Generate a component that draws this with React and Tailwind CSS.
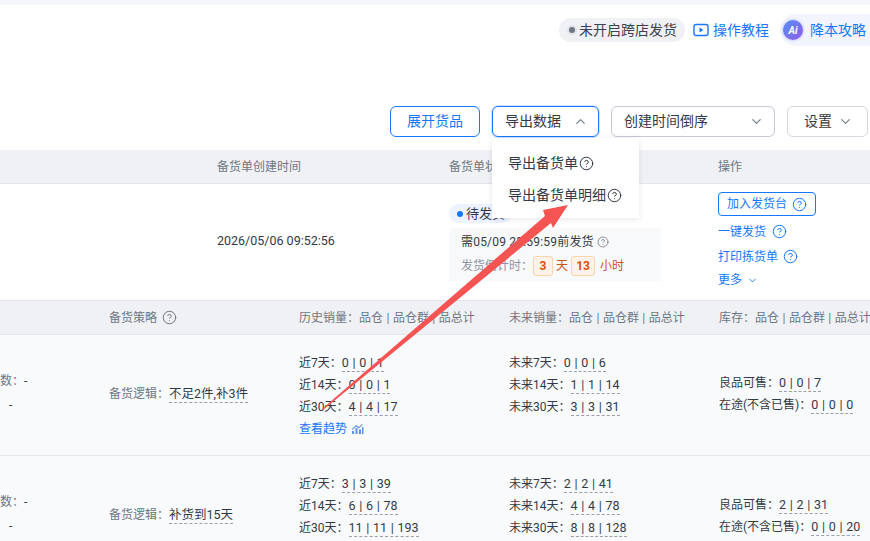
import { ChevronDown, ChevronUp, CircleHelp } from "lucide-react";

const font = { fontFamily: 'Roboto, "Noto Sans CJK SC", sans-serif' };

const rows = [
  {
    strategy: "不足2件,补3件",
    history: [["近7天：", "0 | 0 | 1"], ["近14天：", "0 | 0 | 1"], ["近30天：", "4 | 4 | 17"]],
    future: [["未来7天：", "0 | 0 | 6"], ["未来14天：", "1 | 1 | 14"], ["未来30天：", "3 | 3 | 31"]],
    stock: [["良品可售：", "0 | 0 | 7"], ["在途(不含已售)：", "0 | 0 | 0"]],
    trend: true,
  },
  {
    strategy: "补货到15天",
    history: [["近7天：", "3 | 3 | 39"], ["近14天：", "6 | 6 | 78"], ["近30天：", "11 | 11 | 193"]],
    future: [["未来7天：", "2 | 2 | 41"], ["未来14天：", "4 | 4 | 78"], ["未来30天：", "8 | 8 | 128"]],
    stock: [["良品可售：", "2 | 2 | 31"], ["在途(不含已售)：", "0 | 0 | 20"]],
  },
];

function Help({ className = "h-[15px] w-[15px]" }) {
  return <CircleHelp className={`inline-block shrink-0 ${className}`} strokeWidth={1.6} />;
}

function Metric({ label, value }) {
  return (
    <p className="flex h-[22px] items-center whitespace-nowrap text-[#333a47]">
      {label}
      <span className="border-b border-dashed border-[#9aa1ad] text-[12.5px] leading-[17px] [word-spacing:0.6px]">{value}</span>
    </p>
  );
}

function Row({ item }) {
  return (
    <div className="grid h-[121px] shrink-0 grid-cols-[109px_190px_210px_210px_1fr] border-b border-[#e4e6eb] bg-[#f9fafc] text-[12px]">
      <div className="relative">
        <div className="absolute left-0 top-[34px] flex h-[24px] w-[40px] items-center text-[#6f7683]">
          数：<span className="text-[#333a47]">-</span>
        </div>
        <div className="absolute left-[9px] top-[58px] flex h-[24px] items-center text-[#333a47]">-</div>
      </div>
      <div className="flex items-center whitespace-nowrap pb-[3px] text-[#6f7683]">
        备货逻辑：
        <span className="border-b border-dashed border-[#9aa1ad] text-[12.5px] leading-[17px] text-[#333a47]">{item.strategy}</span>
      </div>
      <div className="pt-[17px]">
        {item.history.map(([label, value]) => (
          <Metric key={label} label={label} value={value} />
        ))}
        {item.trend ? (
          <p className="mt-[1px] flex h-[20px] items-center gap-[4px] text-[#1677ff]">
            查看趋势
            <svg width="13" height="12" viewBox="0 0 13 12" fill="#5b93ee">
              <path d="M1 8h2v3H1zM4.500 5h2v6h-2zM8 6.500h2V11H8zM11 4h1.500v7H11zM1 6l4-4 3 2 3-3 .7.7L8 5.500 5 3.500 1.500 7z" />
            </svg>
          </p>
        ) : null}
      </div>
      <div className="pt-[17px]">
        {item.future.map(([label, value]) => (
          <Metric key={label} label={label} value={value} />
        ))}
      </div>
      <div className={item.trend ? "pt-[37px]" : "pt-[38px]"}>
        {item.stock.map(([label, value]) => (
          <Metric key={label} label={label} value={value} />
        ))}
      </div>
    </div>
  );
}

export default function App() {
  return (
    <div className="relative flex h-[541px] w-[870px] flex-col overflow-hidden bg-white" style={font}>
      <div className="h-[5px] shrink-0 bg-[#f5f6f9]" />

      <div className="flex h-[50px] shrink-0 items-center justify-end text-[14px]">
        <div className="flex h-[24px] items-center gap-[2px] rounded-full bg-[#f0f1f4] px-[8px] text-[#3b4250]">
          <span className="flex h-[10px] w-[10px] items-center justify-center rounded-full bg-[#e2e4e9]">
            <span className="h-[6px] w-[6px] rounded-full bg-[#6f7683]" />
          </span>
          未开启跨店发货
        </div>
        <div className="ml-[8px] flex items-center gap-[4px] text-[#1677ff]">
          <svg width="16" height="14" viewBox="0 0 16 14" fill="none">
            <rect x="1" y="1.500" width="14" height="11" rx="2" stroke="#1677ff" strokeWidth="1.400" />
            <path d="M6.500 4.500v5l4-2.500z" fill="#1677ff" />
          </svg>
          操作教程
        </div>
        <div className="ml-[11px] flex h-[32px] w-[90px] shrink-0 items-center gap-[7px] rounded-l-full bg-[#f2f5fe] pl-[3px] text-[#1677ff]">
          <span className="flex h-[20px] w-[20px] shrink-0 items-center justify-center rounded-full bg-gradient-to-br from-[#4f8df7] to-[#8a5be8] text-[10px] font-bold italic text-white shadow-[0_0_3px_rgba(120,110,240,0.6)]">
            Ai
          </span>
          <span className="whitespace-nowrap">降本攻略</span>
        </div>
      </div>

      <div className="mt-[51px] flex h-[31px] shrink-0 justify-end gap-[12px] pr-[2px] text-[14px]">
        <button type="button" className="flex w-[90px] items-center justify-center rounded-md border border-[#1677ff] text-[#1677ff]">
          展开货品
        </button>
        <button type="button" className="flex w-[107px] items-center justify-between rounded-md border border-[#1677ff] pl-[12px] pr-[10px] text-[#333a47] ring-1 ring-[#cfe2ff]">
          导出数据
          <ChevronUp className="h-[15px] w-[15px] text-[#7b8290]" />
        </button>
        <button type="button" className="flex w-[164px] items-center justify-between rounded-md border border-[#c5cad5] pl-[12px] pr-[10px] text-[#333a47]">
          创建时间倒序
          <ChevronDown className="h-[15px] w-[15px] text-[#7b8290]" />
        </button>
        <button type="button" className="flex w-[81px] items-center gap-[6px] rounded-md border border-[#d5d8df] pl-[16px] text-[#333a47]">
          设置
          <ChevronDown className="h-[15px] w-[15px] text-[#7b8290]" />
        </button>
      </div>

      <div className="mt-[13px] grid h-[34px] shrink-0 grid-cols-[217px_232px_269px_1fr] items-center border-b border-[#e4e6eb] bg-[#f0f1f4] pt-[1px] text-[12px] text-[#6f7683]">
        <span />
        <span>备货单创建时间</span>
        <span>备货单状态</span>
        <span>操作</span>
      </div>

      <div className="grid h-[117px] shrink-0 grid-cols-[217px_232px_269px_1fr] border-b border-[#e4e6eb] text-[12.5px]">
        <span />
        <div className="flex items-center pb-[2px] text-[#333a47]">2026/05/06 09:52:56</div>
        <div className="pt-[20px]">
          <span className="flex h-[19px] w-[63px] items-center gap-[3px] rounded-full bg-[#ecf3ff] pl-[8px] text-[13px] text-[#333a47]">
            <span className="h-[6px] w-[6px] shrink-0 rounded-full bg-[#1677ff]" />
            <span className="whitespace-nowrap">待发货</span>
          </span>
          <div className="mt-[5px] h-[53px] w-[212px] bg-[#f8f9fb] pl-[12px] pt-[4px] text-[12px]">
            <p className="flex h-[20px] items-center gap-[3px] tracking-[0.2px] text-[#333a47]">
              需05/09 23:59:59前发货
              <Help className="h-[12px] w-[12px] text-[#6f7683]" />
            </p>
            <div className="mt-[3px] flex h-[21px] items-center text-[#c9541a]">
              <span className="text-[#8f96a3]">发货倒计时：</span>
              <span className="flex h-[20px] w-[20px] items-center justify-center rounded-[3px] border border-[#fbd5ad] bg-[#fff2e8] font-bold text-[#d9530c]">3</span>
              <span className="mx-[3px]">天</span>
              <span className="flex h-[20px] w-[24px] items-center justify-center rounded-[3px] border border-[#fbd5ad] bg-[#fff2e8] font-bold text-[#d9530c]">13</span>
              <span className="ml-[5px]">小时</span>
            </div>
          </div>
        </div>
        <div className="pt-[8px] text-[12px] text-[#1677ff]">
          <button type="button" className="flex h-[24px] w-[98px] items-center justify-center gap-[5px] rounded-[4px] border border-[#1677ff]">
            加入发货台
            <Help />
          </button>
          <p className="mt-[3px] flex h-[25px] items-center gap-[6px]">一键发货<Help /></p>
          <p className="flex h-[25px] items-center gap-[5px]">打印拣货单<Help /></p>
          <p className="mt-[1px] flex h-[20px] items-center gap-[5px]">更多<ChevronDown className="h-[11px] w-[11px]" /></p>
        </div>
      </div>

      <div className="grid h-[34px] shrink-0 grid-cols-[109px_190px_210px_210px_1fr] items-center border-b border-[#e4e6eb] bg-[#f0f1f4] text-[12px] text-[#6f7683] [word-spacing:0.5px]">
        <span />
        <span className="flex items-center gap-[5px]">备货策略<Help /></span>
        <span>历史销量：品仓 | 品仓群 | 品总计</span>
        <span>未来销量：品仓 | 品仓群 | 品总计</span>
        <span className="whitespace-nowrap">库存：品仓 | 品仓群 | 品总计</span>
      </div>

      {rows.map((item) => (
        <Row key={item.strategy} item={item} />
      ))}

      {/* dropdown opened from the export button */}
      <div className="absolute left-[492px] top-[138px] h-[80px] w-[147px] bg-white pl-[16px] pt-[13px] text-[14px] text-[#333a47] shadow-[0_1px_6px_rgba(0,0,0,0.1)]">
        <p className="flex h-[24px] items-center gap-[1px]">导出备货单<Help /></p>
        <p className="mt-[8px] flex h-[24px] items-center gap-[1px] whitespace-nowrap">导出备货单明细<Help /></p>
      </div>

      {/* annotation arrow drawn over the screenshot */}
      <svg className="pointer-events-none absolute left-0 top-0" width="870" height="541" viewBox="0 0 870 541">
        <path d="M322 409 L545 216 L543 210 L568 205 L553 228 L551 223 L323 410 Z" fill="#f65353" />
      </svg>
    </div>
  );
}
